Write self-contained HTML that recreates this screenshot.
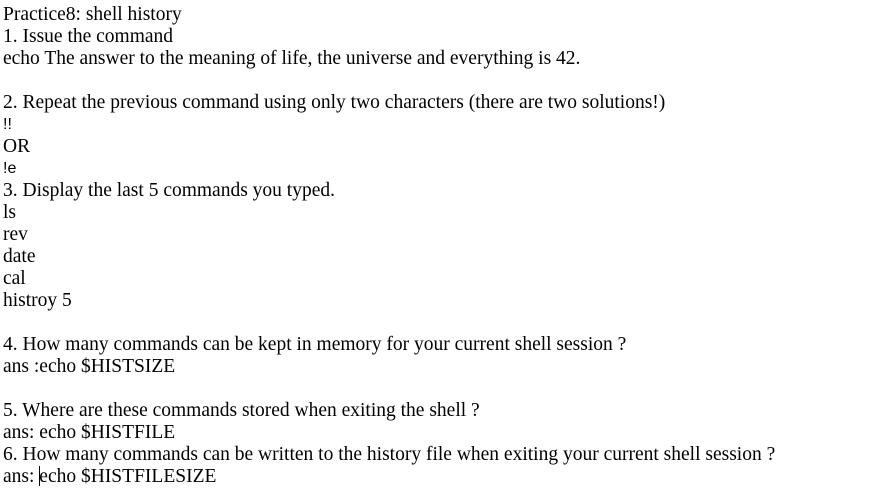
<!DOCTYPE html>
<html><head><meta charset="utf-8"><style>
html,body{margin:0;padding:0;background:#fff;width:886px;height:486px;overflow:hidden}
body{font-family:"Liberation Serif",serif;font-size:19.5px;line-height:22px;color:#000;padding:4px 0 0 3px}
div{height:22px;white-space:nowrap}
.s{font-family:"Liberation Sans",sans-serif;font-size:16px}
.c{display:inline-block;width:1px;height:20px;background:#000;vertical-align:-4px;margin-right:-1px}
</style></head><body>
<div>Practice8: shell history</div>
<div>1. Issue the command</div>
<div>echo The answer to the meaning of life, the universe and everything is 42.</div>
<div></div>
<div>2. Repeat the previous command using only two characters (there are two solutions!)</div>
<div class="s">!!</div>
<div>OR</div>
<div class="s">!e</div>
<div>3. Display the last 5 commands you typed.</div>
<div>ls</div>
<div>rev</div>
<div>date</div>
<div>cal</div>
<div>histroy 5</div>
<div></div>
<div>4. How many commands can be kept in memory for your current shell session ?</div>
<div>ans :echo $HISTSIZE</div>
<div></div>
<div>5. Where are these commands stored when exiting the shell ?</div>
<div>ans: echo $HISTFILE</div>
<div>6. How many commands can be written to the history file when exiting your current shell session ?</div>
<div>ans: <span class="c"></span>echo $HISTFILESIZE</div>
</body></html>
